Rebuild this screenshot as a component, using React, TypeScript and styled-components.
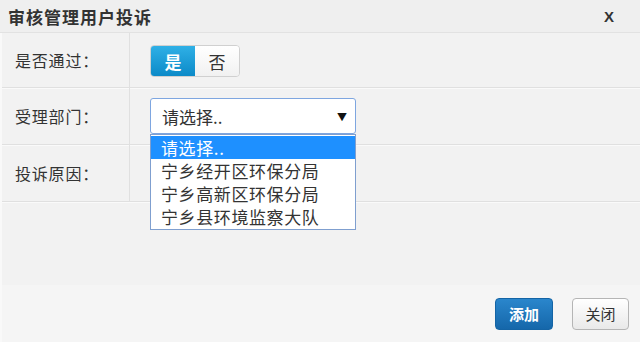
import styled, { createGlobalStyle } from "styled-components";

const GlobalStyle = createGlobalStyle`
  html, body {
    margin: 0;
    padding: 0;
    background: #ffffff;
  }
  body {
    font-family: "Noto Sans CJK SC", "Noto Sans", sans-serif;
    color: #333;
  }
`;

export default function App() {
  const options = ["请选择..", "宁乡经开区环保分局", "宁乡高新区环保分局", "宁乡县环境监察大队"];

  return (
    <>
      <GlobalStyle />
      <Dialog>
        <Header>
          <Title>审核管理用户投诉</Title>
          <CloseX>X</CloseX>
        </Header>
        <Body>
          <Row>
            <Label>是否通过：</Label>
            <Field>
              <Toggle>
                <ToggleItem $active>是</ToggleItem>
                <ToggleItem>否</ToggleItem>
              </Toggle>
            </Field>
          </Row>
          <Row>
            <Label>受理部门：</Label>
            <Field>
              <SelectWrap>
                <SelectBox>
                  <span>请选择..</span>
                  <Arrow>▼</Arrow>
                </SelectBox>
                <OptionList>
                  {options.map((o, i) => (
                    <OptionItem key={i} $selected={i === 0}>
                      {o}
                    </OptionItem>
                  ))}
                </OptionList>
              </SelectWrap>
            </Field>
          </Row>
          <Row>
            <Label>投诉原因：</Label>
            <Field />
          </Row>
        </Body>
        <Footer>
          <PrimaryButton>添加</PrimaryButton>
          <DefaultButton>关闭</DefaultButton>
        </Footer>
      </Dialog>
    </>
  );
}

const Dialog = styled.div`
  width: 640px;
  height: 342px;
  display: flex;
  flex-direction: column;
  overflow: hidden;
`;

const Header = styled.div`
  height: 32px;
  flex-shrink: 0;
  display: flex;
  align-items: center;
  justify-content: space-between;
  padding: 0 26px 0 8px;
  background: #efefef;
  border-bottom: 1px solid #e2e2e2;
`;

const Title = styled.h1`
  margin: 0;
  font-size: 17px;
  font-weight: 700;
  color: #333;
  letter-spacing: 1px;
`;

const CloseX = styled.span`
  font-family: "Liberation Sans", Arial, sans-serif;
  font-size: 15px;
  font-weight: 700;
  color: #333;
`;

const Body = styled.div`
  flex: 1;
  background: #f2f2f2;
  border-left: 2px solid #f9f9f9;
`;

const Row = styled.div`
  display: grid;
  grid-template-columns: 128px 1fr;
  height: 56px;
  border-bottom: 1px solid #e0e0e0;
  box-shadow: 0 1px 0 #fafafa;

  &:first-child {
    height: 54px;
  }
`;

const Label = styled.div`
  display: flex;
  align-items: center;
  padding-left: 13px;
  font-size: 16px;
  letter-spacing: 0.8px;
  color: #333;
  border-right: 1px solid #e0e0e0;
`;

const Field = styled.div`
  display: flex;
  align-items: center;
  padding-left: 20px;
`;

const Toggle = styled.div`
  display: flex;
  height: 30px;
  border: 1px solid #d0d0d0;
  border-radius: 4px;
  overflow: hidden;
  margin-top: 2px;
`;

const ToggleItem = styled.span<{ $active?: boolean }>`
  width: 44px;
  display: flex;
  align-items: center;
  justify-content: center;
  font-size: 17px;
  font-weight: ${(p) => (p.$active ? 700 : 400)};
  color: ${(p) => (p.$active ? "#fff" : "#333")};
  background: ${(p) =>
    p.$active
      ? "linear-gradient(#2fb0e6, #0c8ac8)"
      : "linear-gradient(#ffffff, #f1f1f1)"};
`;

const SelectWrap = styled.div`
  position: relative;
  width: 206px;
`;

const SelectBox = styled.div`
  height: 36px;
  box-sizing: border-box;
  border: 1px solid #7ea6e0;
  border-radius: 3px;
  background: #fff;
  display: flex;
  align-items: center;
  justify-content: space-between;
  padding: 0 8px 0 11px;
  font-size: 17px;
  color: #333;
`;

const Arrow = styled.span`
  font-size: 10px;
  color: #111;
`;

const OptionList = styled.ul`
  position: absolute;
  left: 0;
  top: 36px;
  width: 206px;
  box-sizing: border-box;
  margin: 0;
  padding: 1px 0;
  list-style: none;
  background: #fff;
  border: 1px solid #7f9fcf;
  z-index: 2;
`;

const OptionItem = styled.li<{ $selected?: boolean }>`
  height: 23px;
  line-height: 23px;
  padding-left: 10px;
  font-size: 17px;
  letter-spacing: 0.6px;
  color: ${(p) => (p.$selected ? "#fff" : "#333")};
  background: ${(p) => (p.$selected ? "#1e90ff" : "transparent")};
`;

const Footer = styled.div`
  height: 57px;
  flex-shrink: 0;
  background: #f5f5f5;
  display: flex;
  align-items: center;
  justify-content: flex-end;
  gap: 19px;
  padding-right: 11px;
  border-left: 2px solid #f9f9f9;
`;

const PrimaryButton = styled.button`
  width: 58px;
  height: 32px;
  border: 1px solid #1464a5;
  border-radius: 4px;
  background: linear-gradient(#2a86cc, #1567aa);
  color: #fff;
  font-family: inherit;
  font-size: 15px;
  font-weight: 700;
`;

const DefaultButton = styled.button`
  width: 57px;
  height: 32px;
  border: 1px solid #b5b5b5;
  border-radius: 4px;
  background: linear-gradient(#ffffff, #e9e9e9);
  color: #333;
  font-family: inherit;
  font-size: 15px;
`;
